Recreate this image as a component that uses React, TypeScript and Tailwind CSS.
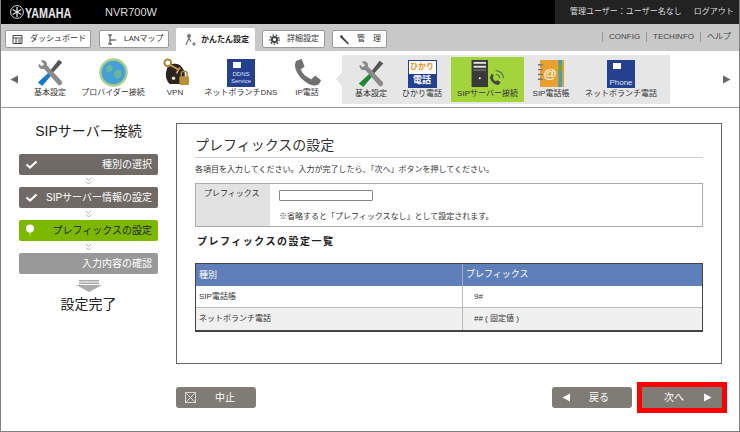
import React from "react";

const Tools = ({ green = false }: { green?: boolean }) => (
  <svg width="29" height="29" viewBox="0 0 32 32">
    <path d="M25 2 L29 5 L17 18 L14 16 Z" fill="#555" />
    <path d="M14 16 L17 19 L7 31 L2 27 Z" fill={green ? "#1c8a2e" : "#1b78c8"} />
    <path d="M5 3 C9 1 13 4 12 8 L28 25 C30 27 28 31 25 30 L9 12 C5 13 2 10 3 6 L6 9 L9 7 Z" fill="#8a8a8a" />
  </svg>
);
const Globe = () => (
  <svg width="29" height="29" viewBox="0 0 30 30">
    <circle cx="15" cy="15" r="13.5" fill="#45a0d8" stroke="#a8d08a" strokeWidth="2.5" />
    <path d="M8 9 C12 6 15 8 14 12 C12 16 8 15 7 12 Z M16 14 C20 11 25 13 23 18 C21 23 17 22 16 18 Z" fill="#6bb59a" />
  </svg>
);
const Keys = () => (
  <svg width="29" height="29" viewBox="0 0 30 30">
    <path d="M6 12 C7 5 19 4 22 10 C27 16 24 25 21 27 L9 27 C5 23 4 17 6 12 Z" fill="#2d2420" />
    <circle cx="7" cy="5" r="3.5" fill="none" stroke="#a8843c" strokeWidth="2" />
    <path d="M9 7 L18 12 L20 10 M18 12 L16 16" stroke="#c09a48" strokeWidth="2" fill="none" />
    <circle cx="13" cy="21" r="1.8" fill="#e8e0d0" />
    <rect x="19" y="19" width="10" height="9" rx="1" fill="#b8913c" />
    <path d="M21 19 V16 C21 13 27 13 27 16 V19" fill="none" stroke="#a8843c" strokeWidth="1.6" />
  </svg>
);
const NavBox = ({ lines, size }: { lines: string[]; size: string }) => (
  <div className="flex h-[28px] w-[28px] flex-col items-center bg-[#25408f] pt-[3px] text-[#dfe6f5]">
    <div className="ml-[-8px] h-[6px] w-[8px] bg-white" />
    <div className={`mt-auto flex flex-col items-center pb-[2px] leading-[7px] ${size}`}>
      {lines.map((l) => (
        <span key={l}>{l}</span>
      ))}
    </div>
  </div>
);
const Handset = () => (
  <svg width="29" height="29" viewBox="0 0 30 30">
    <path d="M3 3 L9 1 L12 9 L8 12 C10 17 14 20 19 22 L23 18 L29 23 L27 27 C25 29 20 29 15 26 C8 22 2 14 2 7 Z" fill="#707070" />
  </svg>
);
const Hikari = () => (
  <div className="flex h-[28px] w-[29px] flex-col border border-[#25408f] bg-[#25408f]">
    <div className="flex h-[13px] items-center justify-center bg-white text-[8px] font-bold leading-none text-[#e8901a]">ひかり</div>
    <div className="flex flex-1 items-center justify-center text-[9px] font-bold leading-none text-white">電話</div>
  </div>
);
const Server = () => (
  <svg width="36" height="29" viewBox="0 0 36 30">
    <rect x="1" y="1" width="17" height="28" fill="#3a3a3a" />
    <rect x="3" y="3" width="13" height="2" fill="#ddd" />
    <rect x="3" y="7" width="13" height="2" fill="#ddd" />
    <rect x="3" y="11" width="13" height="1" fill="#888" />
    <circle cx="9.5" cy="20" r="1" fill="#fff" />
    <path d="M20 19 C21 24 25 27 29 27 L31 24 L28 22 L26 23 C24 22 23 21 23 19 L24 17 L22 15 Z" fill="#444" />
    <path d="M26 16 C29 16 30 18 30 20 M26 12 C31 12 34 16 34 20" stroke="#4c7a4c" strokeWidth="1.2" fill="none" />
  </svg>
);
const Book = () => (
  <svg width="29" height="29" viewBox="0 0 30 30">
    <rect x="3" y="1" width="25" height="28" rx="1" fill="#e8a030" />
    <rect x="22" y="1" width="4" height="28" fill="#4aa0a8" />
    <rect x="22" y="6" width="4" height="6" fill="#78a838" />
    <path d="M1 6 H6 M1 11 H6 M1 16 H6 M1 21 H6" stroke="#777" strokeWidth="1.4" />
    <text x="13.5" y="20" textAnchor="middle" fontSize="14" fill="#fff" fontFamily="Liberation Sans">@</text>
  </svg>
);

const IconItem = ({ icon, label, w }: { icon: React.ReactNode; label: string; w: string }) => (
  <div className={`flex flex-col items-center ${w}`}>
    <div className="flex h-[29px] items-center justify-center">{icon}</div>
    <div className="mt-[1px] whitespace-nowrap text-[8px] leading-[10px] text-[#333]">{label}</div>
  </div>
);

const Tab = ({ icon, label, w }: { icon: React.ReactNode; label: string; w: string }) => (
  <div className={`flex h-[18px] items-center rounded-[2px] border border-[#999] bg-white pl-[6px] text-[8px] text-[#333] ${w}`}>
    <span className="mr-[7px] flex h-[11px] w-[11px] items-center justify-center">{icon}</span>
    <span className="whitespace-nowrap">{label}</span>
  </div>
);

const Check = () => (
  <svg width="13" height="9" viewBox="0 0 13 9">
    <path d="M1.5 4.5 L5 7.5 L11.5 1.5" stroke="#fff" strokeWidth="2.2" fill="none" />
  </svg>
);
const Chevrons = () => (
  <div className="flex h-[12px] items-center justify-center">
    <svg width="7" height="8" viewBox="0 0 7 8">
      <path d="M1 1 L3.5 3.5 L6 1 M1 4.5 L3.5 7 L6 4.5" stroke="#999" strokeWidth="0.8" fill="none" />
    </svg>
  </div>
);
const Pin = () => (
  <svg width="10" height="14" viewBox="0 0 10 14">
    <path d="M3.5 7 L5 13.5 L6.5 7 Z" fill="#a9cf5a" />
    <circle cx="5" cy="4.5" r="4" fill="#fff" />
  </svg>
);

const Step = ({ label, bg, text = "text-white", icon }: { label: string; bg: string; text?: string; icon?: React.ReactNode }) => (
  <div className={`flex h-[21px] items-center justify-between rounded-[2px] pl-[6px] pr-[6px] text-[10px] ${bg} ${text}`}>
    <span className="flex h-[14px] w-[14px] items-center">{icon}</span>
    <span className="whitespace-nowrap">{label}</span>
  </div>
);

const ActionButton = ({ children, rounded = true }: { children: React.ReactNode; rounded?: boolean }) => (
  <div className={`flex h-[21px] w-[80px] shrink-0 items-center bg-[#7f7b75] text-[10px] text-white ${rounded ? "rounded-[3px]" : ""}`}>
    {children}
  </div>
);

const TriL = ({ c = "#fff" }: { c?: string }) => (
  <svg width="9" height="9" viewBox="0 0 9 9" className="shrink-0"><path d="M8 0.5 V8.5 L0.5 4.5 Z" fill={c} /></svg>
);
const TriR = ({ c = "#fff" }: { c?: string }) => (
  <svg width="9" height="9" viewBox="0 0 9 9" className="shrink-0"><path d="M1 0.5 V8.5 L8.5 4.5 Z" fill={c} /></svg>
);

export default function App() {
  return (
    <div className="flex h-[432px] w-[740px] flex-col overflow-hidden border-x border-b border-[#808080] bg-white font-['Liberation_Sans','Noto_Sans_CJK_JP',sans-serif]">
      {/* Header */}
      <div className="flex h-[24px] shrink-0 items-center bg-black">
        <div className="flex w-[554px] items-center pl-[9px]">
          <svg width="14" height="14" viewBox="0 0 14 14">
            <circle cx="7" cy="7" r="6.4" fill="none" stroke="#ddd" strokeWidth="1" />
            <g stroke="#ddd" strokeWidth="1.3">
              <path d="M7 7 V2" />
              <path d="M7 7 L11.3 9.5" />
              <path d="M7 7 L2.7 9.5" />
              <path d="M7 7 L11.3 4.5" />
              <path d="M7 7 L2.7 4.5" />
              <path d="M7 7 V12" />
            </g>
          </svg>
          <span className="ml-[1px] w-[48px] origin-left scale-x-[0.72] whitespace-nowrap text-[15px] font-bold leading-none text-[#e8e8e8]">YAMAHA</span>
          <span className="ml-[32px] text-[11px] leading-none text-[#ddd]">NVR700W</span>
        </div>
        <div className="flex h-full flex-1 items-center bg-[#222] pl-[15px] text-[8px] text-[#ddd]">
          <span className="whitespace-nowrap">管理ユーザー：ユーザー名なし</span>
          <span className="ml-[12px] whitespace-nowrap">ログアウト</span>
        </div>
      </div>

      {/* Tabs */}
      <div className="flex h-[27px] shrink-0 items-end justify-between bg-[#c8c8c8] pl-[4px] pr-[8px]">
        <div className="flex items-end">
          <div className="mb-[3px] mr-[8px]">
            <Tab w="w-[86px]" label="ダッシュボード" icon={<svg width="11" height="11" viewBox="0 0 11 11"><path d="M1 1.5 H10 V9.5 H1 Z M1 4 H10 M4 4 V9.5 M6 6 H9 M6 8 H9" stroke="#333" fill="none" strokeWidth="0.9" /></svg>} />
          </div>
          <div className="mb-[3px] mr-[7px]">
            <Tab w="w-[70px]" label="LANマップ" icon={<svg width="11" height="11" viewBox="0 0 11 11"><path d="M2 1 H6 M4 1 V10 M2 10 H6 M4 6 H10" stroke="#333" fill="none" strokeWidth="1" /></svg>} />
          </div>
          <div className="mr-[7px] flex h-[23px] w-[79px] items-center rounded-t-[2px] bg-white pl-[7px] text-[8px] font-bold text-[#222]">
            <svg width="13" height="14" viewBox="0 0 13 14" className="mr-[5px]"><circle cx="6" cy="3" r="2" fill="#777" /><path d="M6 5 L3 12 M6 5 L8 9 M9 11 H13 M11 9 V13" stroke="#777" strokeWidth="1.2" fill="none" /></svg>
            <span className="whitespace-nowrap">かんたん設定</span>
          </div>
          <div className="mb-[3px] mr-[7px]">
            <Tab w="w-[63px]" label="詳細設定" icon={<svg width="11" height="11" viewBox="0 0 11 11"><circle cx="5.5" cy="5.5" r="2.6" fill="none" stroke="#444" strokeWidth="2" /><circle cx="5.5" cy="5.5" r="4.6" fill="none" stroke="#444" strokeWidth="1.4" strokeDasharray="1.6 1.6" /></svg>} />
          </div>
          <div className="mb-[3px]">
            <Tab w="w-[55px]" label="管　理" icon={<svg width="11" height="11" viewBox="0 0 11 11"><path d="M1.5 1.5 L3 1 L4 3 L10 9.5 L9 10.5 L2.5 4.5 L1 3 Z" fill="#444" /></svg>} />
          </div>
        </div>
        <div className="mb-[9px] flex items-center text-[8px] leading-[10px] text-[#444]">
          <span className="border-l border-[#999] pl-[6px] pr-[6px]">CONFIG</span>
          <span className="border-l border-[#999] pl-[6px] pr-[6px]">TECHINFO</span>
          <span className="border-l border-[#999] pl-[6px]">ヘルプ</span>
        </div>
      </div>

      {/* Icon nav */}
      <div className="flex h-[57px] shrink-0 items-center border-b border-[#999] bg-white pl-[9px]">
        <TriL c="#666" />
        <div className="ml-[-1px] flex shrink-0 items-start self-start pt-[7px]">
          <IconItem w="w-[64px]" icon={<Tools />} label="基本設定" />
          <IconItem w="w-[62px]" icon={<Globe />} label="プロバイダー接続" />
          <IconItem w="w-[62px]" icon={<Keys />} label="VPN" />
          <IconItem w="w-[70px]" icon={<NavBox lines={["DDNS", "Service"]} size="text-[6px]" />} label="ネットボランチDNS" />
          <IconItem w="w-[62px]" icon={<Handset />} label="IP電話" />
        </div>
        <div className="ml-[-2px] h-0 w-0 shrink-0 border-y-[7px] border-r-[6px] border-y-transparent border-r-[#e6e6e6]" />
        <div className="flex h-[49px] w-[328px] shrink-0 items-center bg-[#e6e6e6] pl-[2px]">
          <div className="w-[54px]"><IconItem w="w-full" icon={<Tools green />} label="基本設定" /></div>
          <div className="w-[48px]"><IconItem w="w-full" icon={<Hikari />} label="ひかり電話" /></div>
          <div className="ml-[5px] flex h-[45px] w-[73px] items-center bg-[#a3d43c]"><IconItem w="w-full" icon={<Server />} label="SIPサーバー接続" /></div>
          <div className="w-[54px]"><IconItem w="w-full" icon={<Book />} label="SIP電話帳" /></div>
          <div className="w-[86px]"><IconItem w="w-full" icon={<NavBox lines={["Phone"]} size="text-[8px]" />} label="ネットボランチ電話" /></div>
        </div>
        <div className="ml-[52px] shrink-0"><TriR c="#666" /></div>
      </div>

      {/* Body */}
      <div className="flex flex-1 pl-[18px]">
        {/* Sidebar */}
        <div className="flex w-[139px] shrink-0 flex-col pt-[14px]">
          <div className="h-[32px] text-center text-[14px] leading-[18px] text-[#222]">SIPサーバー接続</div>
          <Step label="種別の選択" bg="bg-[#6f6a66]" icon={<Check />} />
          <Chevrons />
          <Step label="SIPサーバー情報の設定" bg="bg-[#6f6a66]" icon={<Check />} />
          <Chevrons />
          <Step label="プレフィックスの設定" bg="bg-[#7cb800]" text="text-[#222]" icon={<Pin />} />
          <Chevrons />
          <Step label="入力内容の確認" bg="bg-[#999]" />
          <div className="mt-[6px] flex justify-center">
            <svg width="26" height="12" viewBox="0 0 26 12">
              <path d="M3 0 H23 V1.5 H3 Z M3 2.5 H23 V4 H3 Z" fill="#aaa" />
              <path d="M0 5 H26 L13 12 Z" fill="#aaa" />
            </svg>
          </div>
          <div className="mt-[3px] text-center text-[14px] leading-[18px] text-[#222]">設定完了</div>
        </div>

        {/* Main */}
        <div className="ml-[18px] flex w-[546px] shrink-0 flex-col pt-[15px]">
          <div className="flex h-[241px] flex-col border border-[#666] px-[18px] pt-[12px]">
            <div className="border-b border-[#ccc] pb-[3px] text-[14px] leading-[18px] text-[#333]">プレフィックスの設定</div>
            <div className="mt-[6px] whitespace-nowrap text-[8px] leading-[11px] text-[#333]">各項目を入力してください。入力が完了したら、「次へ」ボタンを押してください。</div>
            <div className="mt-[8px] flex h-[44px] border border-[#aaa]">
              <div className="w-[74px] bg-[#e2e2e2] pl-[8px] pt-[4px] text-[8px] leading-[11px] text-[#333]">プレフィックス</div>
              <div className="flex-1 pl-[9px] pt-[6px]">
                <div className="h-[11px] w-[94px] rounded-[1px] border border-[#888] bg-white" />
                <div className="mt-[10px] text-[8px] leading-[11px] text-[#333]">※省略すると「プレフィックスなし」として設定されます。</div>
              </div>
            </div>
            <div className="ml-[2px] mt-[8px] text-[10px] font-bold leading-[13px] tracking-[1.5px] text-[#222]">プレフィックスの設定一覧</div>
            <div className="mt-[15px] border border-[#444] border-b-2">
              <div className="flex h-[22px] items-center bg-[#5f7fbb] text-[9px] text-white">
                <div className="w-[267px] border-r border-[#aab] pl-[3px] leading-[22px]">種別</div>
                <div className="pl-[3px]">プレフィックス</div>
              </div>
              <div className="flex h-[22px] items-center border-b border-[#bbb] bg-white text-[8px] text-[#333]">
                <div className="h-full w-[267px] border-r border-[#bbb] pl-[3px] leading-[22px]">SIP電話帳</div>
                <div className="pl-[11px]">9#</div>
              </div>
              <div className="flex h-[22px] items-center bg-[#f0f0f0] text-[8px] text-[#333]">
                <div className="h-full w-[267px] border-r border-[#bbb] pl-[3px] leading-[22px]">ネットボランチ電話</div>
                <div className="pl-[11px]">## ( 固定値 )</div>
              </div>
            </div>
          </div>
          <div className="mt-[18px] flex items-center justify-between">
            <ActionButton>
              <svg width="11" height="11" viewBox="0 0 11 11" className="ml-[9px]"><path d="M0.5 0.5 H10.5 V10.5 H0.5 Z M0.5 0.5 L10.5 10.5 M10.5 0.5 L0.5 10.5" stroke="#eee" strokeWidth="0.8" fill="none" /></svg>
              <span className="ml-[19px] whitespace-nowrap">中止</span>
            </ActionButton>
            <div className="mr-[-5px] flex items-center">
              <ActionButton>
                <span className="ml-[10px]"><TriL /></span>
                <span className="ml-[18px] whitespace-nowrap">戻る</span>
              </ActionButton>
              <div className="ml-[5px] border-[5px] border-[#f00]">
                <ActionButton rounded={false}>
                  <span className="ml-[22px] whitespace-nowrap">次へ</span>
                  <span className="ml-[19px]"><TriR /></span>
                </ActionButton>
              </div>
            </div>
          </div>
        </div>
      </div>
    </div>
  );
}
